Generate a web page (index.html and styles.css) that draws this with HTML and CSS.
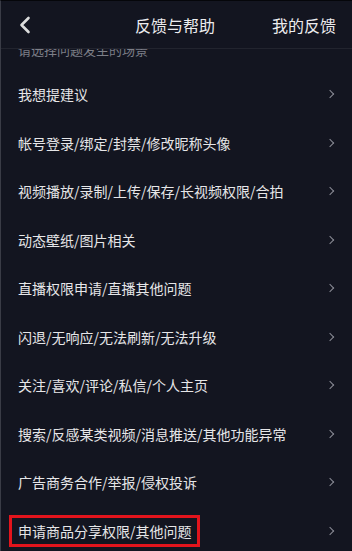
FILE: index.html
```html
<!DOCTYPE html>
<html lang="zh-CN">
<head>
<meta charset="utf-8">
<title>反馈与帮助</title>
<link rel="stylesheet" href="styles.css">
</head>
<body>
<div class="screen">
  <header class="topbar">
    <div class="back">
      <svg width="14" height="18" viewBox="0 0 14 18"><path d="M10.5 2 L3.5 9 L10.5 16" fill="none" stroke="#dcdcdc" stroke-width="2.6" stroke-linecap="round" stroke-linejoin="round"/></svg>
    </div>
    <div class="title">反馈与帮助</div>
    <div class="mine">我的反馈</div>
  </header>
  <main class="list">
    <div class="subtitle">请选择问题发生的场景</div>
    <div class="row"><span class="label">我想提建议</span><span class="chev"></span></div>
    <div class="row"><span class="label">帐号登录/绑定/封禁/修改昵称头像</span><span class="chev"></span></div>
    <div class="row"><span class="label">视频播放/录制/上传/保存/长视频权限/合拍</span><span class="chev"></span></div>
    <div class="row"><span class="label">动态壁纸/图片相关</span><span class="chev"></span></div>
    <div class="row"><span class="label">直播权限申请/直播其他问题</span><span class="chev"></span></div>
    <div class="row"><span class="label">闪退/无响应/无法刷新/无法升级</span><span class="chev"></span></div>
    <div class="row"><span class="label">关注/喜欢/评论/私信/个人主页</span><span class="chev"></span></div>
    <div class="row"><span class="label">搜索/反感某类视频/消息推送/其他功能异常</span><span class="chev"></span></div>
    <div class="row"><span class="label">广告商务合作/举报/侵权投诉</span><span class="chev"></span></div>
    <div class="row"><span class="label marked">申请商品分享权限/其他问题</span><span class="chev"></span></div>
  </main>
</div>
</body>
</html>
```
FILE: styles.css
```css
html, body {
  margin: 0;
  padding: 0;
  background: #131520;
}
.screen {
  width: 352px;
  height: 551px;
  overflow: hidden;
  box-sizing: border-box;
  border-top: 1px solid #05060a;
  border-left: 1px solid #3a3c46;
  background: #131520;
  font-family: "Noto Sans CJK SC", "Noto Sans", sans-serif;
  color: #e6e6e8;
  display: flex;
  flex-direction: column;
}
.topbar {
  height: 47px;
  flex: none;
  border-bottom: 1px solid #22242e;
  display: grid;
  grid-template-columns: 1fr auto 1fr;
  align-items: center;
  padding: 0 16px 0 17px;
  background: #131520;
}
.back {
  display: flex;
  align-items: center;
  height: 18px;
}
.title {
  font-size: 16px;
  color: #ececee;
  line-height: 20px;
  margin-right: 4px;
}
.mine {
  justify-self: end;
  font-size: 16px;
  color: #ececee;
  line-height: 20px;
}
.list {
  flex: 1;
  overflow: hidden;
}
.subtitle {
  margin-top: -8px;
  height: 28.7px;
  line-height: 18px;
  font-size: 13px;
  color: #7d7f88;
  padding-left: 17px;
}
.row {
  height: 48.55px;
  display: flex;
  align-items: center;
  justify-content: space-between;
  padding: 0 19px 0 17px;
}
.label {
  font-size: 14px;
  line-height: 18px;
  color: #e6e6e8;
  white-space: nowrap;
}
.label.marked {
  border: 3px solid #e3141c;
  padding: 4px 5px 4px 6px;
  margin-left: -9px;
  line-height: 18px;
}
.chev {
  width: 5px;
  height: 5px;
  border-top: 1.5px solid #8b8d96;
  border-right: 1.5px solid #8b8d96;
  transform: rotate(45deg);
}
```
